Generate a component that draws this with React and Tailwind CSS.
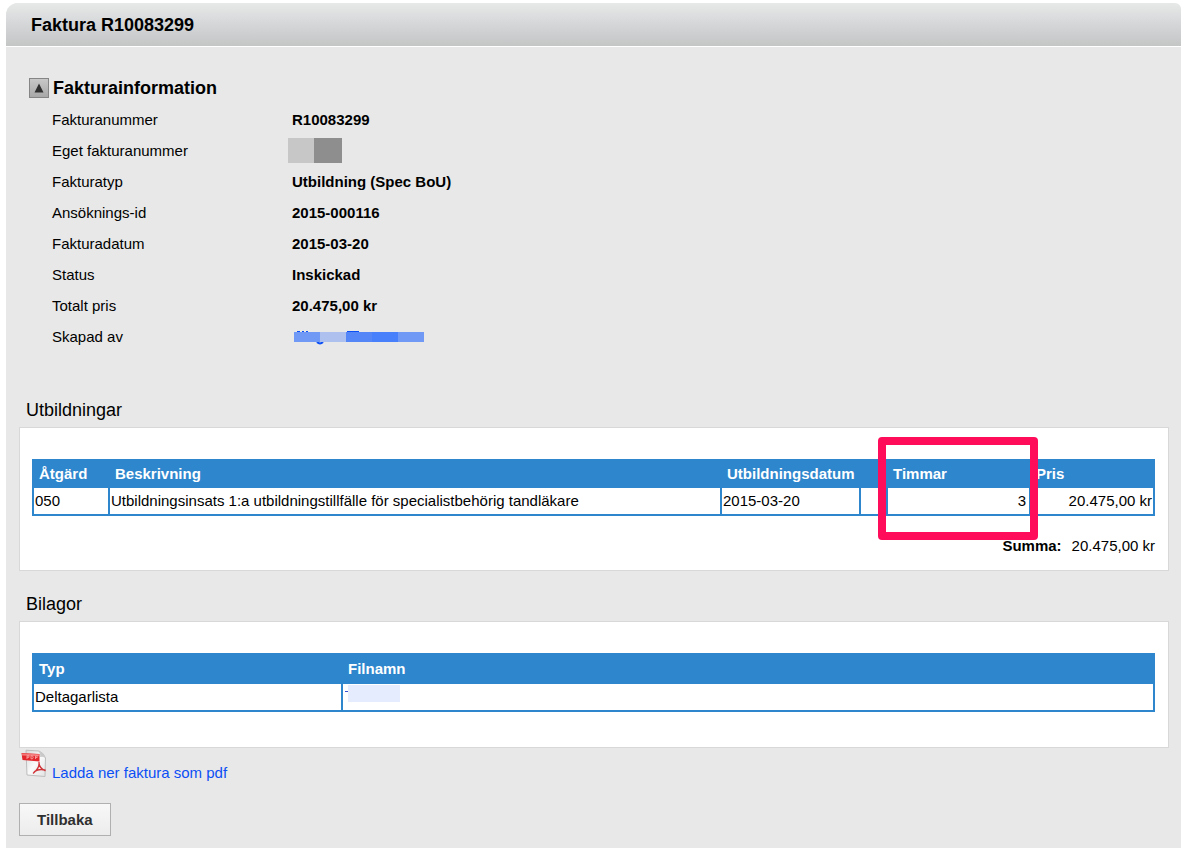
const DETAILS = [
	{ label: "Fakturanummer", value: "R10083299" },
	{ label: "Eget fakturanummer", value: <MaskedNumber /> },
	{ label: "Fakturatyp", value: "Utbildning (Spec BoU)" },
	{ label: "Ansöknings-id", value: "2015-000116" },
	{ label: "Fakturadatum", value: "2015-03-20" },
	{ label: "Status", value: "Inskickad" },
	{ label: "Totalt pris", value: "20.475,00 kr" },
	{ label: "Skapad av", value: <MaskedName /> },
];

const TRAININGS = [
	{
		code: "050",
		description:
			"Utbildningsinsats 1:a utbildningstillfälle för specialistbehörig tandläkare",
		date: "2015-03-20",
		hours: "3",
		price: "20.475,00 kr",
	},
];

const HEAD_CELL =
	"border-2 border-[#2e86cd] px-[5px] text-left font-bold text-white";
const BODY_CELL = "h-7 border-2 border-[#2e86cd] px-px leading-5";

function MaskedNumber() {
	return (
		<span className="-ml-1 flex h-[25px]">
			<span className="w-[26px] bg-[#c7c7c7]" />
			<span className="w-7 bg-[#8e8e8e]" />
		</span>
	);
}

function MaskedName() {
	return (
		<a href="#skapad-av" aria-label="Skapad av" className="ml-0.5 block pt-0.5">
			<svg width="130" height="15" viewBox="0 0 130 15">
				<path
					d="M3 1.5h3M8 1.5h2M12 1.5h2M53 1.5h12"
					stroke="#0b4ff5"
					strokeWidth="1"
				/>
				<path
					d="M23 12q3 3 6 0"
					fill="none"
					stroke="#0b4ff5"
					strokeWidth="2"
				/>
				<path fill="#7099f5" d="M0 2h26v10H0zM104 2h26v10h-26z" />
				<path fill="#adc0ee" d="M26 2h26v10H26z" />
				<path fill="#5486f8" d="M52 2h26v10H52z" />
				<path fill="#487ffb" d="M78 2h26v10H78z" />
			</svg>
		</a>
	);
}

function PdfIcon() {
	return (
		<svg width="26" height="29" viewBox="0 0 26 29" aria-hidden="true">
			<defs>
				<linearGradient id="sheet" x1="0" y1="0" x2="1" y2="1">
					<stop offset="0" stopColor="#d8d8d8" />
					<stop offset="0.5" stopColor="#fafafa" />
					<stop offset="1" stopColor="#e2e2e2" />
				</linearGradient>
			</defs>
			<path
				d="M5 1.2 18 2q5 2 6.500 7L24 27.500 6 26z"
				fill="url(#sheet)"
				stroke="#bdbdbd"
			/>
			<path d="M17 2q3 3 2 6 3-1 5.500 1-1-5-7.500-7z" fill="#c9c9c9" />
			<path d="M0.500 4 18.500 5v7.500L1.500 11z" fill="#e3262b" />
			<path d="M1 4.500 18 5.300v2L1 6.500z" fill="#f4787a" />
			<path
				d="M6 6.500v3.500M6 6.800h2v1.500H6M10 6.800v3h1.500l.7-1.500-.7-1.500zM14.500 10V7h2.500M14.500 8.500h2"
				fill="none"
				stroke="#f8a5a5"
				strokeWidth="0.900"
			/>
			<path
				d="M18 13.500c.5 3-1.500 7-5.500 10.500M18 14c0 3 2.500 6.500 6 7.500M13.500 22.500c3-2 7-2.500 10.500-1.500"
				fill="none"
				stroke="#cf3338"
				strokeWidth="1.400"
				strokeLinecap="round"
			/>
		</svg>
	);
}

function Section({ title, children }) {
	return (
		<section>
			<h2 className="px-[7px] text-lg leading-6">{title}</h2>
			<div className="mt-[5px] border border-[#d8d8d8] bg-white pr-[13px] pl-3 pt-[31px]">
				{children}
			</div>
		</section>
	);
}

function TrainingTable() {
	return (
		<table className="w-full table-fixed border-collapse">
			<colgroup>
				<col className="w-[76px]" />
				<col />
				<col className="w-[139px]" />
				<col className="w-[27px]" />
				<col className="w-[143px]" />
				<col className="w-[124px]" />
			</colgroup>
			<thead className="bg-[#2e86cd]">
				<tr className="h-[27px]">
					<th className={HEAD_CELL}>Åtgärd</th>
					<th className={HEAD_CELL}>Beskrivning</th>
					<th className={HEAD_CELL}>Utbildningsdatum</th>
					<th className={HEAD_CELL} aria-label="Övrigt" />
					<th className={`${HEAD_CELL} relative`}>
						Timmar
						{/* highlight frame around the hours column */}
						<span className="pointer-events-none absolute -top-6 -left-2.5 z-10 h-[103px] w-40 rounded-sm border-8 border-[#ff0d5b]" />
					</th>
					<th className={HEAD_CELL}>Pris</th>
				</tr>
			</thead>
			<tbody>
				{TRAININGS.map((row) => (
					<tr key={row.code}>
						<td className={BODY_CELL}>{row.code}</td>
						<td className={BODY_CELL}>{row.description}</td>
						<td className={BODY_CELL}>{row.date}</td>
						<td className={BODY_CELL} />
						<td className={`${BODY_CELL} text-right`}>
							<span className="pr-0.5">{row.hours}</span>
						</td>
						<td className={`${BODY_CELL} text-right`}>{row.price}</td>
					</tr>
				))}
			</tbody>
		</table>
	);
}

function AttachmentTable() {
	return (
		<table className="w-full table-fixed border-collapse">
			<colgroup>
				<col className="w-[309px]" />
				<col />
			</colgroup>
			<thead className="bg-[#2e86cd]">
				<tr className="h-[29px]">
					<th className={HEAD_CELL}>Typ</th>
					<th className={HEAD_CELL}>Filnamn</th>
				</tr>
			</thead>
			<tbody>
				<tr>
					<td className={BODY_CELL}>Deltagarlista</td>
					<td className={BODY_CELL}>
						<a href="#bilaga" aria-label="Filnamn" className="block">
							<svg width="57" height="24" viewBox="0 0 57 24">
								<path fill="#3a4fd0" d="M1 6h3v1H1z" />
								<path fill="#e5ecfe" d="M4 0h52v17H4z" />
							</svg>
						</a>
					</td>
				</tr>
			</tbody>
		</table>
	);
}

export default function App() {
	return (
		<main className="mt-[3px] mr-2.5 mb-[7px] ml-1.5 bg-[#e8e8e8] font-['Liberation_Sans',Arial,sans-serif] text-[15px] leading-5 text-black rounded-t-xl">
			<header className="rounded-tl-xl rounded-tr-md border-b border-white bg-linear-to-b from-[#e7e9e8] via-[#d5d6d8] to-[#c4c5c5] px-[25px] pt-[11px] pb-[9px]">
				<h1 className="text-lg leading-[23px] font-bold">
					Faktura R10083299
				</h1>
			</header>

			<div className="pt-[29px] pr-3 pb-3 pl-[13px]">
				<section className="px-2.5">
					<div className="flex items-center gap-1">
						<button
							type="button"
							aria-label="Dölj fakturainformation"
							className="flex size-5 items-center justify-center border border-[#858585] bg-linear-to-b from-[#c8c8c8] to-[#a8a8a8]"
						>
							<svg width="10" height="10" viewBox="0 0 10 10">
								<path d="M5 0.500 9.500 9.500H0.500z" fill="#303030" />
							</svg>
						</button>
						<h2 className="text-lg leading-6 font-bold">
							Fakturainformation
						</h2>
					</div>
					<dl className="mt-1 pl-[23px]">
						{DETAILS.map(({ label, value }) => (
							<div key={label} className="flex h-[31px] items-center">
								<dt className="w-60">{label}</dt>
								<dd className="font-bold">{value}</dd>
							</div>
						))}
					</dl>
				</section>

				<div className="mt-[46px]">
					<Section title="Utbildningar">
						<TrainingTable />
						<p className="flex justify-end gap-2.5 pt-5 pb-3.5">
							<strong>Summa:</strong>
							<span>20.475,00 kr</span>
						</p>
					</Section>
				</div>

				<div className="mt-[21px]">
					<Section title="Bilagor">
						<div className="pb-[35px]">
							<AttachmentTable />
						</div>
					</Section>
				</div>

				<a
					href="#pdf"
					className="mt-px ml-0.5 flex items-start gap-[5px] text-[#0b4ff5]"
				>
					<PdfIcon />
					<span className="pt-3.5">Ladda ner faktura som pdf</span>
				</a>

				<button
					type="button"
					className="mt-5 h-[33px] border border-[#b0b0b0] bg-linear-to-b from-[#f8f8f8] to-[#ececec] px-[17px] font-bold text-[#303030]"
				>
					Tillbaka
				</button>
			</div>
		</main>
	);
}
